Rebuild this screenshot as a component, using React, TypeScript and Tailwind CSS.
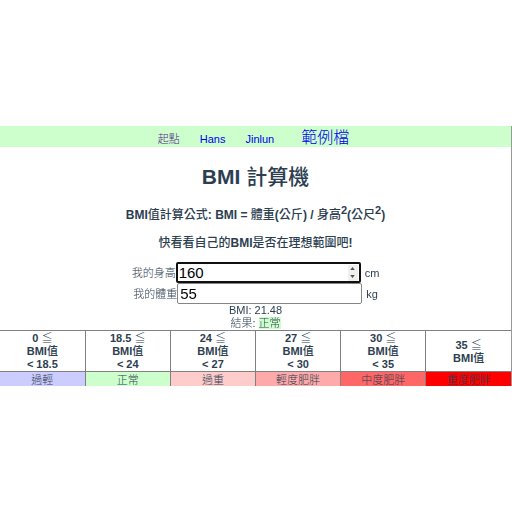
import { useState } from "react";

const links = [
  { label: "起點", style: "text-[11px] text-[#551a8b]" },
  { label: "Hans", style: "text-[11px] text-[#0000ee]" },
  { label: "Jinlun", style: "text-[11px] text-[#0000ee]" },
  { label: "範例檔", style: "ml-[7px] text-base text-[#0000ee]" },
];

const ranges = [
  { from: "0", to: "18.5", name: "過輕", color: "bg-[#ccccff]" },
  { from: "18.5", to: "24", name: "正常", color: "bg-[#ccffcc]" },
  { from: "24", to: "27", name: "過重", color: "bg-[#ffcccc]" },
  { from: "27", to: "30", name: "輕度肥胖", color: "bg-[#ffaaaa]" },
  { from: "30", to: "35", name: "中度肥胖", color: "bg-[#ff6666]" },
  { from: "35", to: "", name: "重度肥胖", color: "bg-[#ff0000]" },
];

export default function App() {
  const [height, setHeight] = useState("160");
  const [weight, setWeight] = useState("55");
  const h = Number(height) / 100;
  const bmi = Number(weight) / (h * h);
  const result = ranges.find((r) => bmi < Number(r.to || Infinity)) ?? ranges[5];

  const step = (by: number) => setHeight(String(Number(height) + by));

  return (
    <div className="flex min-h-screen flex-col justify-center bg-white font-['Liberation_Sans','Noto_Sans_CJK_TC',sans-serif] font-light text-[#2c3e50]">
      <main className="border-r border-[#999999] text-[11px] leading-[14px]">
        <nav className="flex h-[21px] items-baseline justify-center gap-5 bg-[#ccffcc] pr-1 leading-[21px]">
          {links.map((l) => (
            <a key={l.label} href="#" className={l.style}>
              {l.label}
            </a>
          ))}
        </nav>

        <h1 className="mt-4 text-center text-[21px] leading-7 font-bold">
          BMI <span className="font-medium">計算機</span>
        </h1>
        <h3 className="mt-4 text-center text-xs leading-4 font-bold">
          BMI<span className="font-medium">值計算公式</span>: BMI ={" "}
          <span className="font-medium">體重</span>(<span className="font-medium">公斤</span>) /{" "}
          <span className="font-medium">身高</span>
          <sup className="text-[11px]">2</sup>(<span className="font-medium">公尺</span>
          <sup className="text-[11px]">2</sup>)
        </h3>
        <h3 className="mt-3 text-center text-xs leading-4 font-bold">
          <span className="font-medium">快看看自己的</span>BMI
          <span className="font-medium">是否在理想範圍吧</span>!
        </h3>

        <div className="mt-[11px] flex items-center justify-center">
          <label htmlFor="height">我的身高</label>
          <div className="flex h-[21px] w-[185px] items-center rounded-xs border-2 border-[#101010] bg-white pr-px">
            <input
              id="height"
              inputMode="decimal"
              autoFocus
              onFocus={(e) => e.target.setSelectionRange(e.target.value.length, e.target.value.length)}
              value={height}
              onChange={(e) => setHeight(e.target.value)}
              className="w-full min-w-0 flex-1 px-px text-[15px] font-normal text-black outline-none"
            />
            <div className="flex h-4 w-2.5 flex-col bg-[#efefef] text-[#505050]">
              <button type="button" aria-label="+" onClick={() => step(1)} className="flex flex-1 items-center justify-center">
                <svg viewBox="0 0 6 4" className="h-[3px] w-[5px]"><path d="M0 4 3 0 6 4Z" fill="currentColor" /></svg>
              </button>
              <button type="button" aria-label="-" onClick={() => step(-1)} className="flex flex-1 items-center justify-center">
                <svg viewBox="0 0 6 4" className="h-[3px] w-[5px]"><path d="M0 0 3 4 6 0Z" fill="currentColor" /></svg>
              </button>
            </div>
          </div>
          <span className="ml-1">cm</span>
        </div>
        <div className="flex items-center justify-center">
          <label htmlFor="weight">我的體重</label>
          <input
            id="weight"
            inputMode="decimal"
            value={weight}
            onChange={(e) => setWeight(e.target.value)}
            className="h-[21px] w-[185px] rounded-xs border border-[#858585] px-0.5 text-[15px] font-normal text-black"
          />
          <span className="ml-1">kg</span>
        </div>
        <p className="text-center leading-[13px]">BMI: {bmi.toFixed(2)}</p>
        <p className="text-center leading-[13px]">
          結果: <span className={result.color}>{result.name}</span>
        </p>

        <div className="h-14 overflow-hidden">
          <table className="w-full table-fixed border-collapse border-t border-[#808080] text-center">
            <thead>
              <tr>
                {ranges.map((r) => (
                  <th key={r.from} className="h-[41px] border-r border-b border-[#808080] p-0 pt-px leading-[13px] last:border-r-0">
                    {r.from} <span className="font-light">≦</span>
                    <br />
                    BMI<span className="font-medium">值</span>
                    {r.to && (
                      <>
                        <br />
                        {"< " + r.to}
                      </>
                    )}
                  </th>
                ))}
              </tr>
            </thead>
            <tbody>
              <tr>
                {ranges.map((r) => (
                  <td key={r.from} className={`border-r border-[#808080] p-0 leading-4 last:border-r-0 ${r.color}`}>
                    {r.name}
                  </td>
                ))}
              </tr>
            </tbody>
          </table>
        </div>
      </main>
    </div>
  );
}
